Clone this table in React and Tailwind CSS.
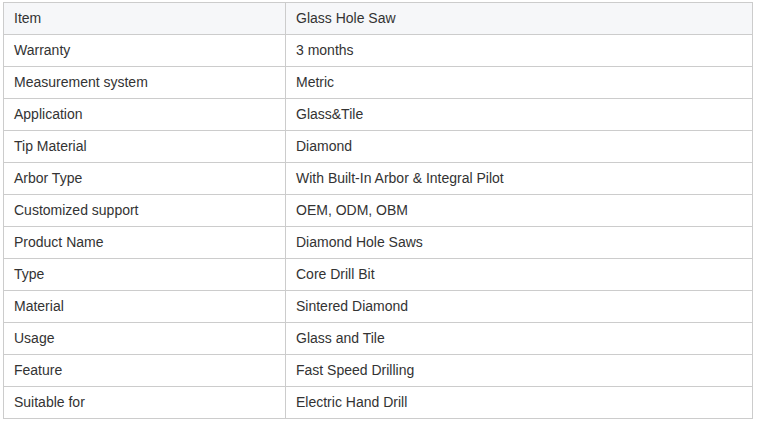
export default function App() {
  const rows = [
    ["Item", "Glass Hole Saw"],
    ["Warranty", "3 months"],
    ["Measurement system", "Metric"],
    ["Application", "Glass&Tile"],
    ["Tip Material", "Diamond"],
    ["Arbor Type", "With Built-In Arbor & Integral Pilot"],
    ["Customized support", "OEM, ODM, OBM"],
    ["Product Name", "Diamond Hole Saws"],
    ["Type", "Core Drill Bit"],
    ["Material", "Sintered Diamond"],
    ["Usage", "Glass and Tile"],
    ["Feature", "Fast Speed Drilling"],
    ["Suitable for", "Electric Hand Drill"],
  ];
  return (
    <div className="bg-white w-[757px] h-[423px] pt-[2px] pl-[3px]" style={{ fontFamily: '"Liberation Sans", Arial, sans-serif' }}>
      <table className="w-[750px] border-collapse text-[14px] text-[#333333] table-fixed">
        <colgroup>
          <col className="w-[282px]" />
          <col />
        </colgroup>
        <tbody>
          {rows.map(([a, b], i) => (
            <tr key={i} className={i === 0 ? "bg-[#f6f7f9]" : "bg-white"}>
              <td className="border border-[#cccccc] h-[32px] px-[10px] py-0 leading-[31px] align-middle">{a}</td>
              <td className="border border-[#cccccc] h-[32px] px-[10px] py-0 leading-[31px] align-middle">{b}</td>
            </tr>
          ))}
        </tbody>
      </table>
    </div>
  );
}
